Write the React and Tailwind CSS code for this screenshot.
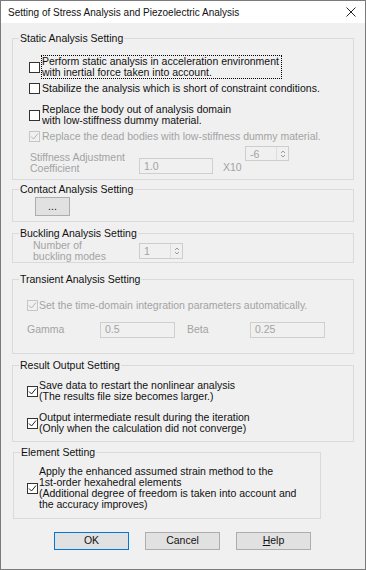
import React from 'react';

const DIS = 'text-[#a3a3a3]';

function Check({ checked, disabled }) {
  return (
    <span
      className={`flex h-[11px] w-[11px] shrink-0 items-center justify-center border ${
        disabled ? 'border-[#c6c6c6] bg-[#f0f0f0] text-[#b4b4b4]' : 'border-[#333333] bg-white text-[#222222]'
      }`}
    >
      {checked && (
        <svg width="9" height="9" viewBox="0 0 9 9" fill="none" stroke="currentColor" strokeWidth="1">
          <polyline points="1,4.5 3.5,7 8,1.5" />
        </svg>
      )}
    </span>
  );
}

function Spin({ value, className }) {
  return (
    <div className={`flex border border-[#cdcdcd] bg-[#f0f0f0] ${DIS} ${className}`}>
      <span className="flex-1 pl-[4px] leading-[14px]">{value}</span>
      <span className="flex w-[12px] items-center justify-center border-l border-[#dddddd] text-[#9a9a9a]">
        <svg width="6" height="10" viewBox="0 0 6 10" fill="none" stroke="currentColor" strokeWidth="1">
          <polyline points="1,4 3,2 5,4" />
          <polyline points="1,6 3,8 5,6" />
        </svg>
      </span>
    </div>
  );
}

function Field({ value, className }) {
  return (
    <div className={`flex items-center border border-[#cfcfcf] bg-[#f0f0f0] pl-[4px] ${DIS} ${className}`}>
      {value}
    </div>
  );
}

function Group({ title, className, children }) {
  return (
    <fieldset className={`min-w-0 border border-[#dadada] ${className}`}>
      <legend className="ml-[6px] px-[1px] leading-[12px]">{title}</legend>
      {children}
    </fieldset>
  );
}

function Button({ children, primary }) {
  return (
    <button
      className={`flex h-[18px] w-[75px] items-center justify-center border bg-[#e1e1e1] ${
        primary ? 'border-[#0078d7]' : 'border-[#adadad]'
      }`}
    >
      {children}
    </button>
  );
}

export default function App() {
  return (
    <div className="flex h-[570px] w-[366px] flex-col border border-[#7a7a7a] bg-[#f0f0f0] font-['Liberation_Sans',Arial,sans-serif] text-[10.5px] text-[#111111]">
      {/* Title bar */}
      <div className="flex h-[22px] items-center justify-between bg-white pl-[7px] pr-[9px] text-[10px]">
        <span>Setting of Stress Analysis and Piezoelectric Analysis</span>
        <svg width="10" height="10" viewBox="0 0 10 10" stroke="#222" strokeWidth="1">
          <line x1="0.5" y1="0.5" x2="9.5" y2="9.5" />
          <line x1="9.5" y1="0.5" x2="0.5" y2="9.5" />
        </svg>
      </div>

      {/* Static */}
      <Group title="Static Analysis Setting" className="mx-[11px] mt-[9px] pb-[5px]">
        <div className="pl-[16px] pt-[11px] leading-[11px]">
          <div className="flex items-center">
            <Check />
            <span className="ml-[1px] border border-dotted border-black pr-[2px]">
              Perform static analysis in acceleration environment
              <br />
              with inertial force taken into account.
            </span>
          </div>
          <div className="mt-[4px] flex items-center">
            <Check />
            <span className="ml-[2px]">Stabilize the analysis which is short of constraint conditions.</span>
          </div>
          <div className="mt-[10px] flex items-center">
            <Check />
            <span className="ml-[2px]">
              Replace the body out of analysis domain
              <br />
              with low-stiffness dummy material.
            </span>
          </div>
          <div className={`mt-[5px] flex items-center ${DIS}`}>
            <Check checked disabled />
            <span className="ml-[2px]">Replace the dead bodies with low-stiffness dummy material.</span>
          </div>
          <div className={`mt-[4px] flex h-[28px] items-end ${DIS}`}>
            <span className="ml-[1px] w-[109px]">
              Stiffness Adjustment
              <br />
              Coefficient
            </span>
            <Field value="1.0" className="h-[16px] w-[74px]" />
            <span className="mb-[1px] ml-[10px] w-[22px]">X10</span>
            <Spin value="-6" className="h-[15px] w-[44px] self-start" />
          </div>
        </div>
      </Group>

      {/* Contact */}
      <Group title="Contact Analysis Setting" className="mx-[11px] mt-[3px] pb-[5px]">
        <div className="pl-[22px] pt-[2px]">
          <button className="flex h-[19px] w-[35px] items-center justify-center border border-[#adadad] bg-[#e1e1e1] leading-none">
            ...
          </button>
        </div>
      </Group>

      {/* Buckling */}
      <Group title="Buckling Analysis Setting" className="mx-[11px] mt-[5px]">
        <div className={`flex items-center pl-[20px] pt-[1px] ${DIS}`}>
          <span className="w-[106px] leading-[11px]">
            Number of
            <br />
            buckling modes
          </span>
          <Spin value="1" className="h-[16px] w-[44px]" />
        </div>
      </Group>

      {/* Transient */}
      <Group title="Transient Analysis Setting" className="mx-[11px] mt-[10px] pb-[15px]">
        <div className={`pl-[14px] pt-[15px] ${DIS}`}>
          <div className="flex items-center leading-[11px]">
            <Check checked disabled />
            <span className="ml-[1px]">Set the time-domain integration parameters automatically.</span>
          </div>
          <div className="mt-[11px] flex h-[16px] items-center">
            <span className="w-[73px]">Gamma</span>
            <Field value="0.5" className="h-[16px] w-[75px]" />
            <span className="ml-[12px] w-[63px]">Beta</span>
            <Field value="0.25" className="h-[16px] w-[75px]" />
          </div>
        </div>
      </Group>

      {/* Result */}
      <Group title="Result Output Setting" className="mx-[11px] mt-[5px] pb-[7px]">
        <div className="pl-[14px] pt-[9px] leading-[11px]">
          <div className="flex items-center">
            <Check checked />
            <span className="ml-[1px]">
              Save data to restart the nonlinear analysis
              <br />
              (The results file size becomes larger.)
            </span>
          </div>
          <div className="mt-[10px] flex items-center">
            <Check checked />
            <span className="ml-[1px]">
              Output intermediate result during the iteration
              <br />
              (Only when the calculation did not converge)
            </span>
          </div>
        </div>
      </Group>

      {/* Element */}
      <Group title="Element Setting" className="ml-[12px] mt-[4px] w-[308px] pb-[8px]">
        <div className="flex items-center pl-[13px] pt-[8px] leading-[11px]">
          <Check checked />
          <span className="ml-[1px]">
            Apply the enhanced assumed strain method to the
            <br />
            1st-order hexahedral elements
            <br />
            (Additional degree of freedom is taken into account and
            <br />
            the accuracy improves)
          </span>
        </div>
      </Group>

      {/* Buttons */}
      <div className="mt-[13px] flex gap-[16px] pl-[53px]">
        <Button primary>OK</Button>
        <Button>Cancel</Button>
        <Button>
          <span>
            <span className="underline">H</span>elp
          </span>
        </Button>
      </div>
    </div>
  );
}
